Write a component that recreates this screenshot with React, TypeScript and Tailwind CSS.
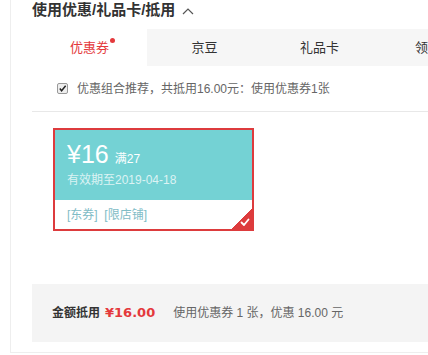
const font = "font-['Liberation_Sans','Noto_Sans_CJK_SC',sans-serif]";

function Tab({ label, active }: { label: string; active?: boolean }) {
  return (
    <div
      className={
        "relative flex h-[37px] w-[115px] shrink-0 items-center justify-center text-[13px] " +
        (active ? "bg-white text-[#e4393c]" : "bg-[#f6f6f6] text-[#333]")
      }
    >
      <span className="relative">
        {label}
        {active && (
          <span className="absolute -right-[6px] top-[0px] h-[5px] w-[5px] rounded-full bg-[#e4393c]"></span>
        )}
      </span>
    </div>
  );
}

function CouponCard() {
  return (
    <div className="relative h-[103px] w-[201px] border-2 border-[#dd3b3d] bg-white">
      <div className="flex h-[70px] flex-col bg-[#74d2d4] px-[12px] pt-[10px] text-white">
        <div className="flex items-baseline">
          <span className="font-['Liberation_Sans',sans-serif] text-[25px] leading-[28px]">¥16</span>
          <span className="ml-[6px] text-[12px]">满27</span>
        </div>
        <div className="mt-[4px] text-[12px] leading-[16px] text-white/75">有效期至2019-04-18</div>
      </div>
      <div className="flex h-[29px] items-center px-[12px] text-[12px] text-[#7fbcc6]">
        [东券]&nbsp;&nbsp;[限店铺]
      </div>
      <div className="absolute bottom-0 right-0 h-[20px] w-[20px] bg-[linear-gradient(135deg,transparent_50%,#dd3b3d_50%)]">
        <svg viewBox="0 0 20 20" className="absolute inset-0 h-[20px] w-[20px]">
          <path d="M9.5 13.5 L12 16 L16.5 10.5" fill="none" stroke="#fff" strokeWidth="1.8" strokeLinecap="round" strokeLinejoin="round" />
        </svg>
      </div>
    </div>
  );
}

export default function App() {
  return (
    <div className={"h-[355px] w-[428px] overflow-hidden bg-white " + font}>
      <div className="ml-[10px] border-b border-l border-[#eee] pb-[10px] pl-[21px]">
        <div className="flex h-[29px] items-center pb-[8px] text-[15px] font-bold text-[#333]">
          使用优惠/礼品卡/抵用
          <svg viewBox="0 0 12 8" className="ml-[7px] h-[8px] w-[12px]">
            <path d="M1 7 L6 2 L11 7" fill="none" stroke="#555" strokeWidth="1.2" />
          </svg>
        </div>

        <div className="flex overflow-hidden">
          <Tab label="优惠券" active />
          <Tab label="京豆" />
          <Tab label="礼品卡" />
          <Tab label="领货码" />
        </div>

        <div className="flex h-[46px] items-center border-b border-[#e8e8e8] pl-[25px] text-[12px] text-[#666]">
          <span className="relative mr-[9px] flex h-[11px] w-[11px] items-center justify-center rounded-[2px] border border-[#999] bg-[#eee]">
            <svg viewBox="0 0 10 10" className="h-[9px] w-[9px]">
              <path d="M2 5 L4 7.5 L8.5 2" fill="none" stroke="#222" strokeWidth="1.6" />
            </svg>
          </span>
          优惠组合推荐，共抵用16.00元：使用优惠券1张
        </div>

        <div className="pl-[21px] pt-[16px] pb-[53px]">
          <CouponCard />
        </div>

        <div className="flex h-[58px] items-center bg-[#f4f4f4] pl-[20px] text-[12px]">
          <span className="font-bold text-[#333]">金额抵用</span>
          <span className="ml-[5px] font-['DejaVu_Sans',sans-serif] text-[13px] font-bold text-[#e4393c]">¥16.00</span>
          <span className="ml-[18px] text-[#666]">使用优惠券 1 张，优惠 16.00 元</span>
        </div>
      </div>
    </div>
  );
}
